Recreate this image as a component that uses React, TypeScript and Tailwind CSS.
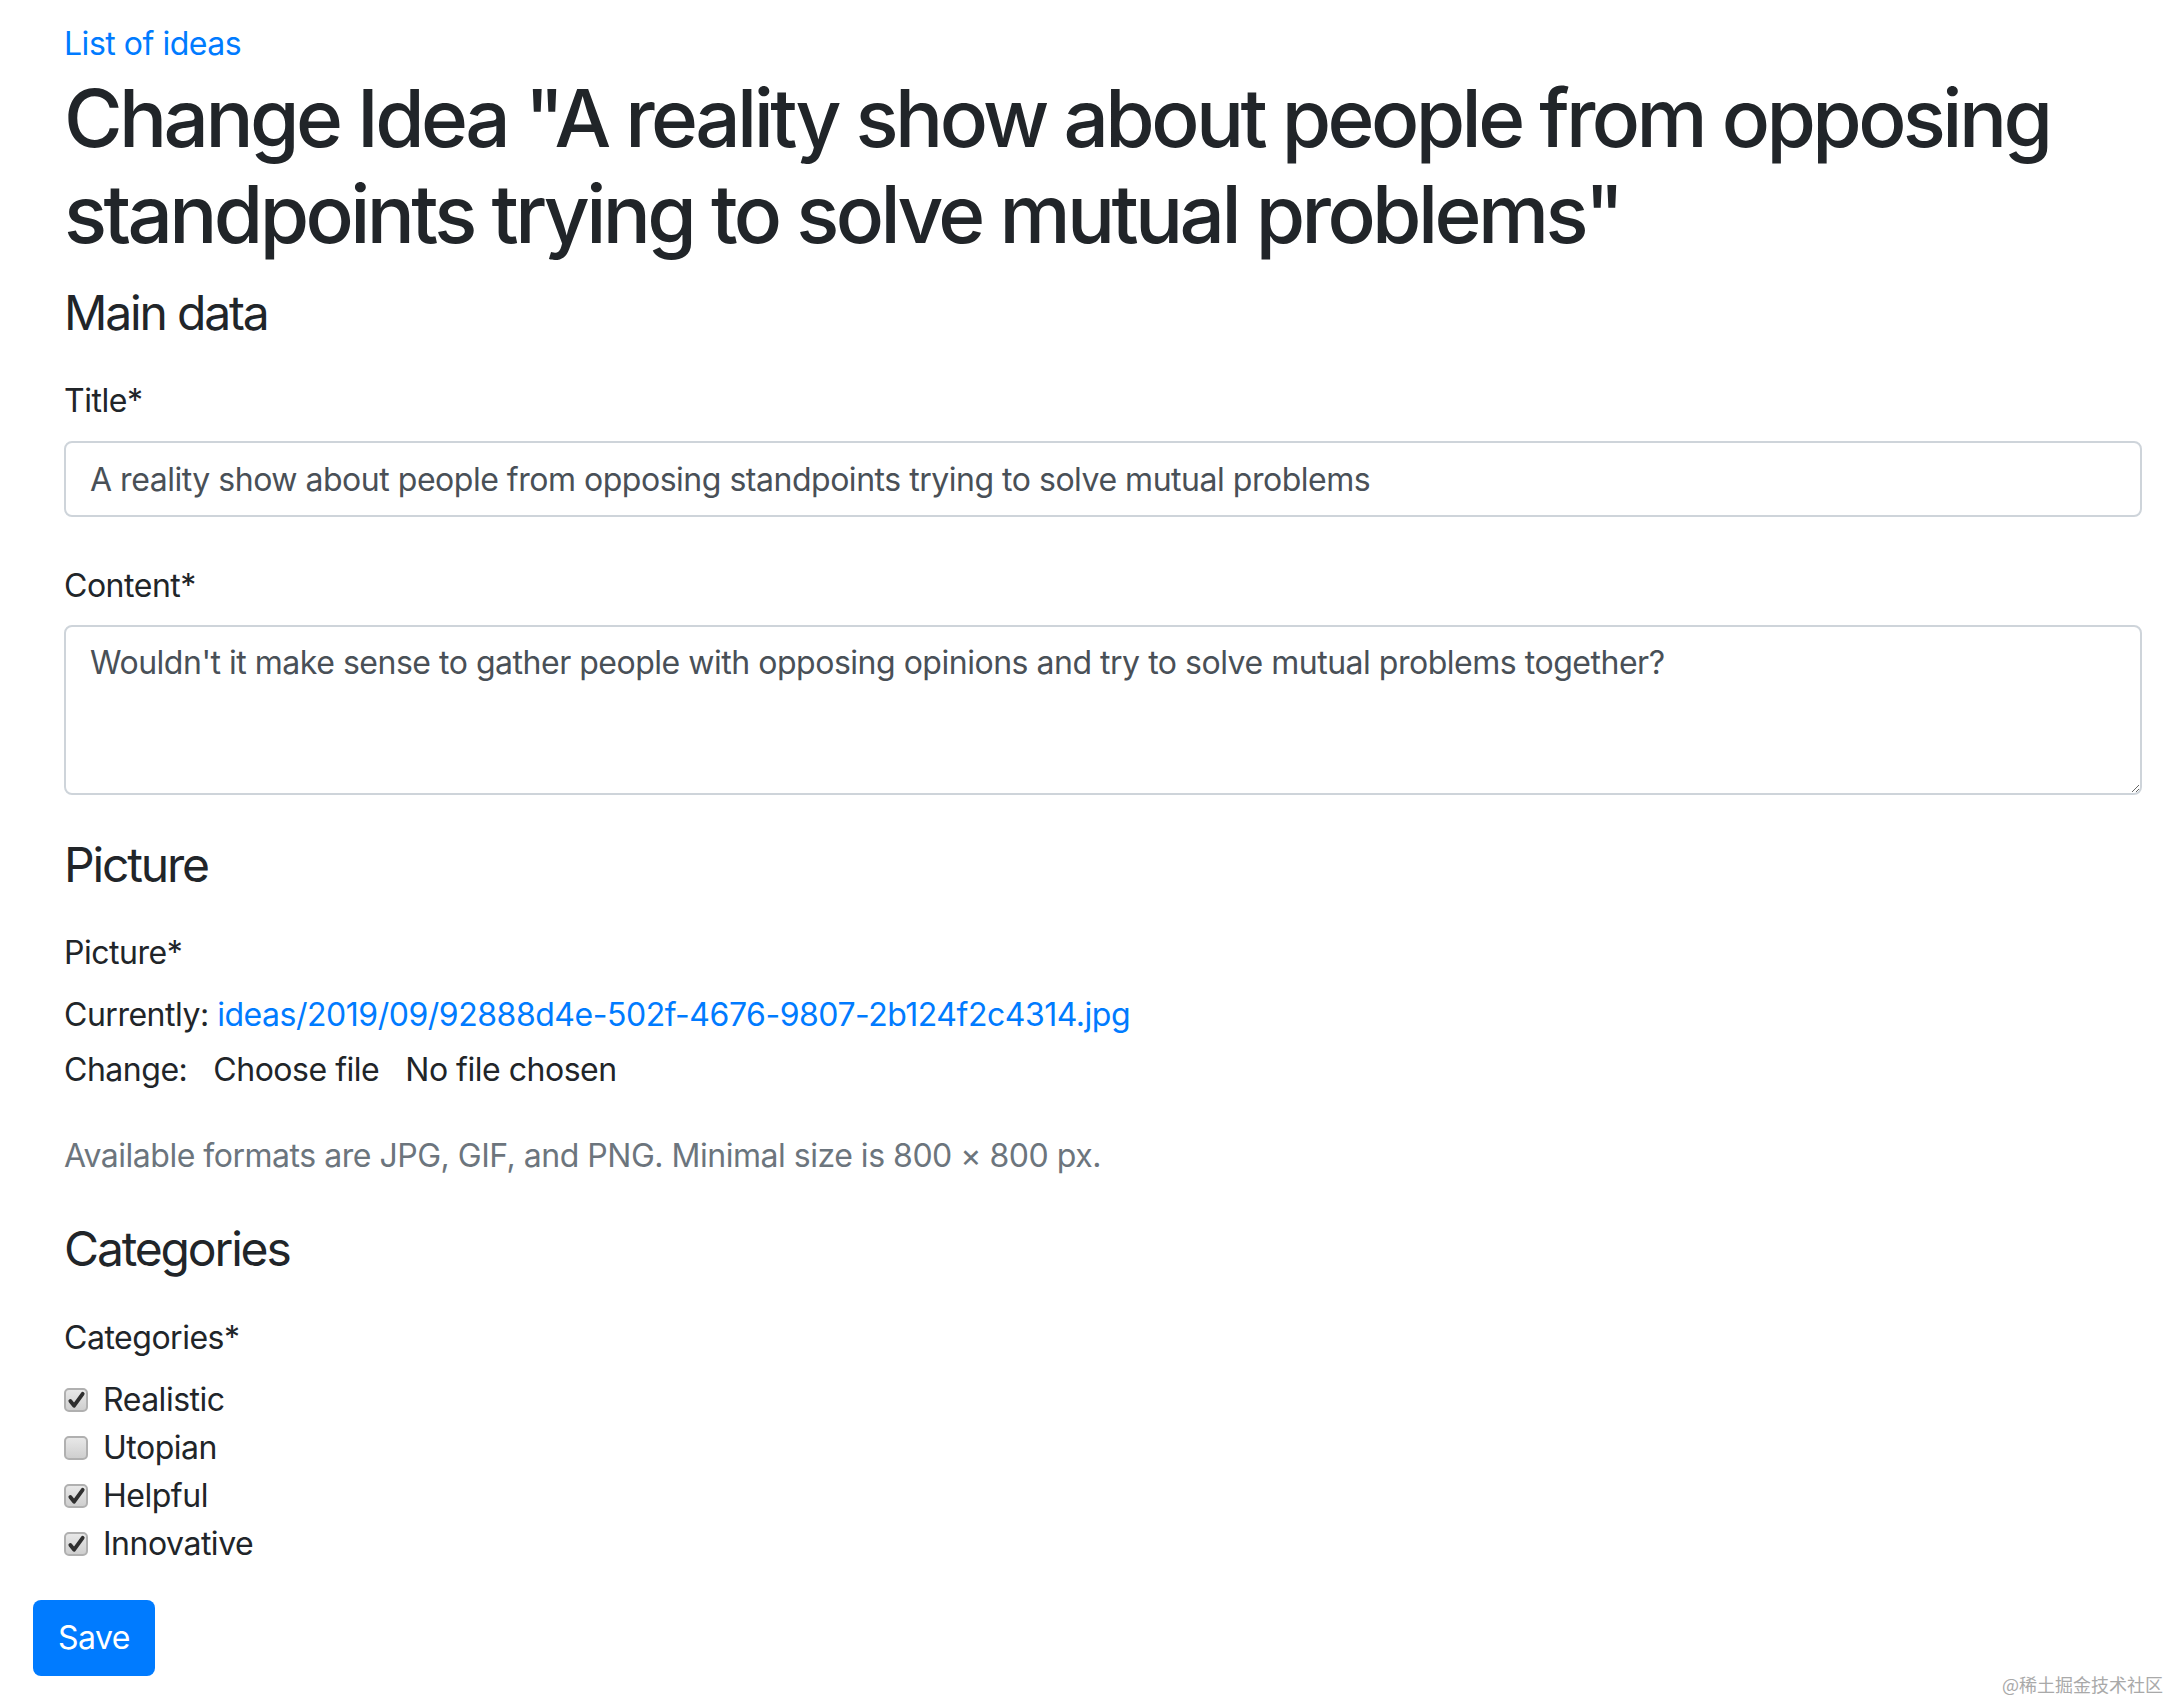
import React from 'react';

const CATEGORIES: { label: string; checked: boolean }[] = [
  { label: 'Realistic', checked: true },
  { label: 'Utopian', checked: false },
  { label: 'Helpful', checked: true },
  { label: 'Innovative', checked: true },
];

function MacCheckbox({ checked }: { checked: boolean }) {
  return (
    <span className="flex h-[24px] w-[24px] shrink-0 items-center justify-center rounded-[5px] border-2 border-[#b0b0b0] bg-gradient-to-b from-[#e8e8e8] to-[#cfcfcf]">
      {checked && (
        <svg viewBox="0 0 20 20" className="h-[19px] w-[19px]">
          <path d="M3.5 10.5 L7.5 15.5 L16.5 3" fill="none" stroke="#2f2f2f" strokeWidth="4" strokeLinecap="round" strokeLinejoin="round" />
        </svg>
      )}
    </span>
  );
}

export default function App() {
  return (
    <div className="relative min-h-screen bg-white text-[#212529] tracking-[-0.03em] font-['Inter','Liberation_Sans',sans-serif]">
      <div className="pl-[33px] pr-[29px] pt-[20px]">
        <div className="pl-[31px]">
          <a href="#" className="block text-[32px] leading-[48px] text-[#007bff]">List of ideas</a>
          <h1 className="mt-[2px] text-[80px] leading-[96px] font-medium tracking-[-0.045em]">
            Change Idea "A reality show about people from opposing standpoints trying to solve mutual problems"
          </h1>

          {/* Main data */}
          <div className="mt-[15px] text-[48px] leading-[72px] tracking-[-0.045em]">Main data</div>
          <div className="mt-[28px] text-[32px] leading-[48px]">Title*</div>
          <input
            type="text"
            defaultValue="A reality show about people from opposing standpoints trying to solve mutual problems"
            className="mt-[16px] block h-[76px] w-full rounded-[8px] border-2 border-[#ced4da] bg-white px-[24px] py-[12px] text-[32px] leading-[48px] text-[#495057] outline-none"
          />
          <div className="mt-[45px] text-[32px] leading-[48px]">Content*</div>
          <textarea
            defaultValue="Wouldn't it make sense to gather people with opposing opinions and try to solve mutual problems together?"
            className="mt-[15px] block h-[170px] w-full rounded-[8px] border-2 border-[#ced4da] bg-white px-[24px] py-[12px] text-[32px] leading-[48px] text-[#495057] outline-none"
          />

          {/* Picture */}
          <div className="mt-[34px] text-[48px] leading-[72px] tracking-[-0.045em]">Picture</div>
          <div className="mt-[28px] text-[32px] leading-[48px]">Picture*</div>
          <div className="mt-[14px] text-[32px] leading-[48px]">
            Currently: <a href="#" className="text-[#007bff]">ideas/2019/09/92888d4e-502f-4676-9807-2b124f2c4314.jpg</a>
          </div>
          <div className="mt-[7px] flex text-[32px] leading-[48px]">
            <span>Change:</span>
            <span className="ml-[26px]">Choose file</span>
            <span className="ml-[26px]">No file chosen</span>
          </div>
          <div className="mt-[38px] text-[32px] leading-[48px] text-[#6c757d]">
            Available formats are JPG, GIF, and PNG. Minimal size is 800 × 800 px.
          </div>

          {/* Categories */}
          <div className="mt-[33px] text-[48px] leading-[72px] tracking-[-0.045em]">Categories</div>
          <div className="mt-[29px] text-[32px] leading-[48px]">Categories*</div>
          <div className="mt-[14px]">
            {CATEGORIES.map(({ label, checked }) => (
              <label key={label} className="flex h-[48px] items-center gap-[15px] text-[32px] leading-[48px]">
                <MacCheckbox checked={checked} />
                <span>{label}</span>
              </label>
            ))}
          </div>
        </div>

        <button className="mt-[32px] flex h-[76px] w-[122px] items-center justify-center rounded-[8px] bg-[#007bff] text-[32px] leading-[48px] text-white">
          Save
        </button>
      </div>

      <div className="absolute bottom-[6px] right-[8px] text-[18px] leading-[22px] tracking-normal text-[#a9a9a9] font-['Noto_Sans_CJK_SC',sans-serif]">
        @稀土掘金技术社区
      </div>
    </div>
  );
}
